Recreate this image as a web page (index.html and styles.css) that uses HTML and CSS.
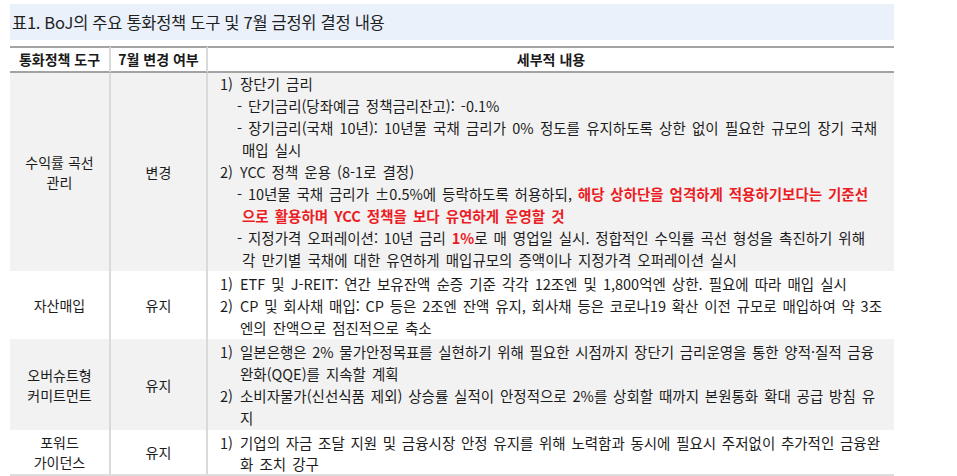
FILE: index.html
```html
<!DOCTYPE html>
<html lang="ko">
<head>
<meta charset="utf-8">
<link rel="stylesheet" href="styles.css">
</head>
<body>
<div class="page">
  <div class="title">표1. BoJ의 주요 통화정책 도구 및 7월 금정위 결정 내용</div>
  <table class="tbl">
    <colgroup><col class="c1"><col class="c2"><col class="c3"></colgroup>
    <thead>
      <tr>
        <th class="sep">통화정책 도구</th>
        <th class="sep">7월 변경 여부</th>
        <th>세부적 내용</th>
      </tr>
    </thead>
    <tbody>
      <tr class="r1 gray">
        <td class="sep mid">수익률 곡선<br>관리</td>
        <td class="sep mid">변경</td>
        <td class="det">
          <div class="ln"><span class="n">1)</span>장단기 금리</div>
          <div class="ln sub">- 단기금리(당좌예금 정책금리잔고): -0.1%</div>
          <div class="ln sub just e877">- 장기금리(국채 10년): 10년물 국채 금리가 0% 정도를 유지하도록 상한 없이 필요한 규모의 장기 국채</div>
          <div class="ln cont2">매입 실시</div>
          <div class="ln"><span class="n">2)</span>YCC 정책 운용 (8-1로 결정)</div>
          <div class="ln sub just e868">- 10년물 국채 금리가 ±0.5%에 등락하도록 허용하되, <span class="red">해당 상하단을 엄격하게 적용하기보다는 기준선</span></div>
          <div class="ln cont2 red">으로 활용하며 YCC 정책을 보다 유연하게 운영할 것</div>
          <div class="ln sub just e865">- 지정가격 오퍼레이션: 10년 금리 <span class="red">1%</span>로 매 영업일 실시. 정합적인 수익률 곡선 형성을 촉진하기 위해</div>
          <div class="ln cont2">각 만기별 국채에 대한 유연하게 매입규모의 증액이나 지정가격 오퍼레이션 실시</div>
        </td>
      </tr>
      <tr class="r2">
        <td class="sep mid">자산매입</td>
        <td class="sep mid">유지</td>
        <td class="det">
          <div class="ln"><span class="n">1)</span>ETF 및 J-REIT: 연간 보유잔액 순증 기준 각각 12조엔 및 1,800억엔 상한. 필요에 따라 매입 실시</div>
          <div class="ln just e882"><span class="n">2)</span>CP 및 회사채 매입: CP 등은 2조엔 잔액 유지, 회사채 등은 코로나19 확산 이전 규모로 매입하여 약 3조</div>
          <div class="ln cont1">엔의 잔액으로 점진적으로 축소</div>
        </td>
      </tr>
      <tr class="r3 gray">
        <td class="sep mid">오버슈트형<br>커미트먼트</td>
        <td class="sep mid">유지</td>
        <td class="det">
          <div class="ln just e874"><span class="n">1)</span>일본은행은 2% 물가안정목표를 실현하기 위해 필요한 시점까지 장단기 금리운영을 통한 양적·질적 금융</div>
          <div class="ln cont1">완화(QQE)를 지속할 계획</div>
          <div class="ln just e875"><span class="n">2)</span>소비자물가(신선식품 제외) 상승률 실적이 안정적으로 2%를 상회할 때까지 본원통화 확대 공급 방침 유</div>
          <div class="ln cont1">지</div>
        </td>
      </tr>
      <tr class="r4 last">
        <td class="sep mid">포워드<br>가이던스</td>
        <td class="sep mid">유지</td>
        <td class="det">
          <div class="ln just e880"><span class="n">1)</span>기업의 자금 조달 지원 및 금융시장 안정 유지를 위해 노력함과 동시에 필요시 주저없이 추가적인 금융완</div>
          <div class="ln cont1">화 조치 강구</div>
        </td>
      </tr>
    </tbody>
  </table>
</div>
</body>
</html>
```

FILE: styles.css
```css
html, body {
  margin: 0;
  padding: 0;
  background: #ffffff;
}

body {
  font-family: "Noto Sans CJK KR", "Noto Sans", sans-serif;
  color: #1c1c1c;
}

.page {
  padding: 4px 0 0 10px;
  width: 884px;
}

.title {
  height: 36px;
  line-height: 36px;
  padding-left: 2px;
  background: #eaf1fa;
  font-size: 16.5px;
  color: #1f1f1f;
  letter-spacing: -0.3px;
}

.tbl {
  margin-top: 6px;
  width: 884px;
  table-layout: fixed;
  border-collapse: separate;
  border-spacing: 0;
  font-size: 14px;
}

.c1 { width: 101px; }
.c2 { width: 97px; }

.tbl th {
  height: 23px;
  padding: 0;
  font-weight: bold;
  font-size: 14px;
  line-height: 23px;
  text-align: center;
  border-top: 2px solid #a3a3a3;
  border-bottom: 2px solid #a3a3a3;
  color: #1a1a1a;
}

.tbl td {
  padding: 0;
  box-sizing: border-box;
}

.sep {
  border-right: 2px solid #dadada;
}

.mid {
  text-align: center;
  vertical-align: middle;
  line-height: 20px;
}

.gray td {
  background: #f2f2f2;
}

.r1 td { height: 197px; }
.r2 td { height: 67px; }
.r3 td { height: 91px; }
.r4 td { height: 45px; }

.last td {
  border-bottom: 2px solid #dedede;
}

.det {
  vertical-align: top;
  padding: 0 18px 0 12px !important;
  font-size: 14.5px;
}

.r2 .det, .r3 .det, .r4 .det {
  padding-top: 2px !important;
}

.r4 .det .ln {
  line-height: 21px;
}

.ln {
  line-height: 22px;
  white-space: nowrap;
  word-spacing: 2px;
}

.n {
  display: inline-block;
  width: 20px;
}

.sub {
  padding-left: 17px;
}

.cont1 {
  padding-left: 20px;
}

.cont2 {
  padding-left: 22px;
}

.just {
  text-align: justify;
  text-align-last: justify;
  word-spacing: 0;
}

.e865 { margin-right: 11px; }
.e868 { margin-right: 8px; }
.e874 { margin-right: 2px; }
.e875 { margin-right: 1px; }
.e877 { margin-right: -1px; }
.e880 { margin-right: -4px; }
.e882 { margin-right: -6px; }

.red {
  color: #ec1c24;
  font-weight: bold;
}
```
